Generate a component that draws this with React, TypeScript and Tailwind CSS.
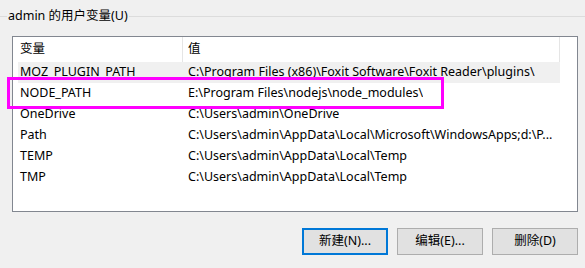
import React from 'react';

const rows = [
  { name: 'MOZ_PLUGIN_PATH', value: 'C:\\Program Files (x86)\\Foxit Software\\Foxit Reader\\plugins\\', selected: true },
  { name: 'NODE_PATH', value: 'E:\\Program Files\\nodejs\\node_modules\\' },
  { name: 'OneDrive', value: 'C:\\Users\\admin\\OneDrive' },
  { name: 'Path', value: 'C:\\Users\\admin\\AppData\\Local\\Microsoft\\WindowsApps;d:\\P...' },
  { name: 'TEMP', value: 'C:\\Users\\admin\\AppData\\Local\\Temp' },
  { name: 'TMP', value: 'C:\\Users\\admin\\AppData\\Local\\Temp' },
];

const font = { fontFamily: '"Noto Sans", "Noto Sans CJK SC", sans-serif' };

export default function App() {
  return (
    <div
      className="relative w-[585px] h-[268px] bg-[#f0f0f0] overflow-hidden text-[12.5px] text-black pt-[8px]"
      style={font}
    >
      {/* Group title */}
      <div className="flex items-center h-[17px]">
        <div className="w-[7px] h-px bg-[#dcdcdc]" />
        <span className="px-[1px] leading-none whitespace-nowrap">admin 的用户变量(U)</span>
        <div className="flex-1 h-px bg-[#dcdcdc]" />
      </div>

      {/* List view */}
      <div className="mt-[11px] ml-[12px] w-[566px] h-[176px] border border-[#828790] bg-white overflow-hidden">
        <div className="flex h-[25px]">
          <div className="w-[170px] border-r border-[#e5e5e5] pl-[7px] flex items-center">变量</div>
          <div className="w-[377px] border-r border-[#e5e5e5] pl-[5px] flex items-center">值</div>
        </div>
        {rows.map((r) => (
          <div
            key={r.name}
            className={`ml-[5px] w-[542px] h-[21px] flex items-center whitespace-nowrap ${r.selected ? 'bg-[#f0f0f0]' : ''}`}
          >
            <div className="w-[164px] pl-[2px]">{r.name}</div>
            <div className="pl-[6px] overflow-hidden">{r.value}</div>
          </div>
        ))}
      </div>

      {/* Buttons */}
      <div className="flex justify-end gap-[9px] pr-[7px] mt-[16px]">
        <button className="w-[86px] h-[27px] border-2 border-[#0078d7] bg-[#e1e1e1] flex items-center justify-center">
          新建(N)...
        </button>
        <button className="w-[86px] h-[27px] border border-[#adadad] bg-[#e1e1e1] flex items-center justify-center">
          编辑(E)...
        </button>
        <button className="w-[86px] h-[27px] border border-[#adadad] bg-[#e1e1e1] flex items-center justify-center">
          删除(D)
        </button>
      </div>

      {/* Highlight annotation */}
      <div className="absolute left-[7px] top-[77px] w-[437px] h-[32px] border-[3px] border-[#ff00ff] pointer-events-none" />
    </div>
  );
}
